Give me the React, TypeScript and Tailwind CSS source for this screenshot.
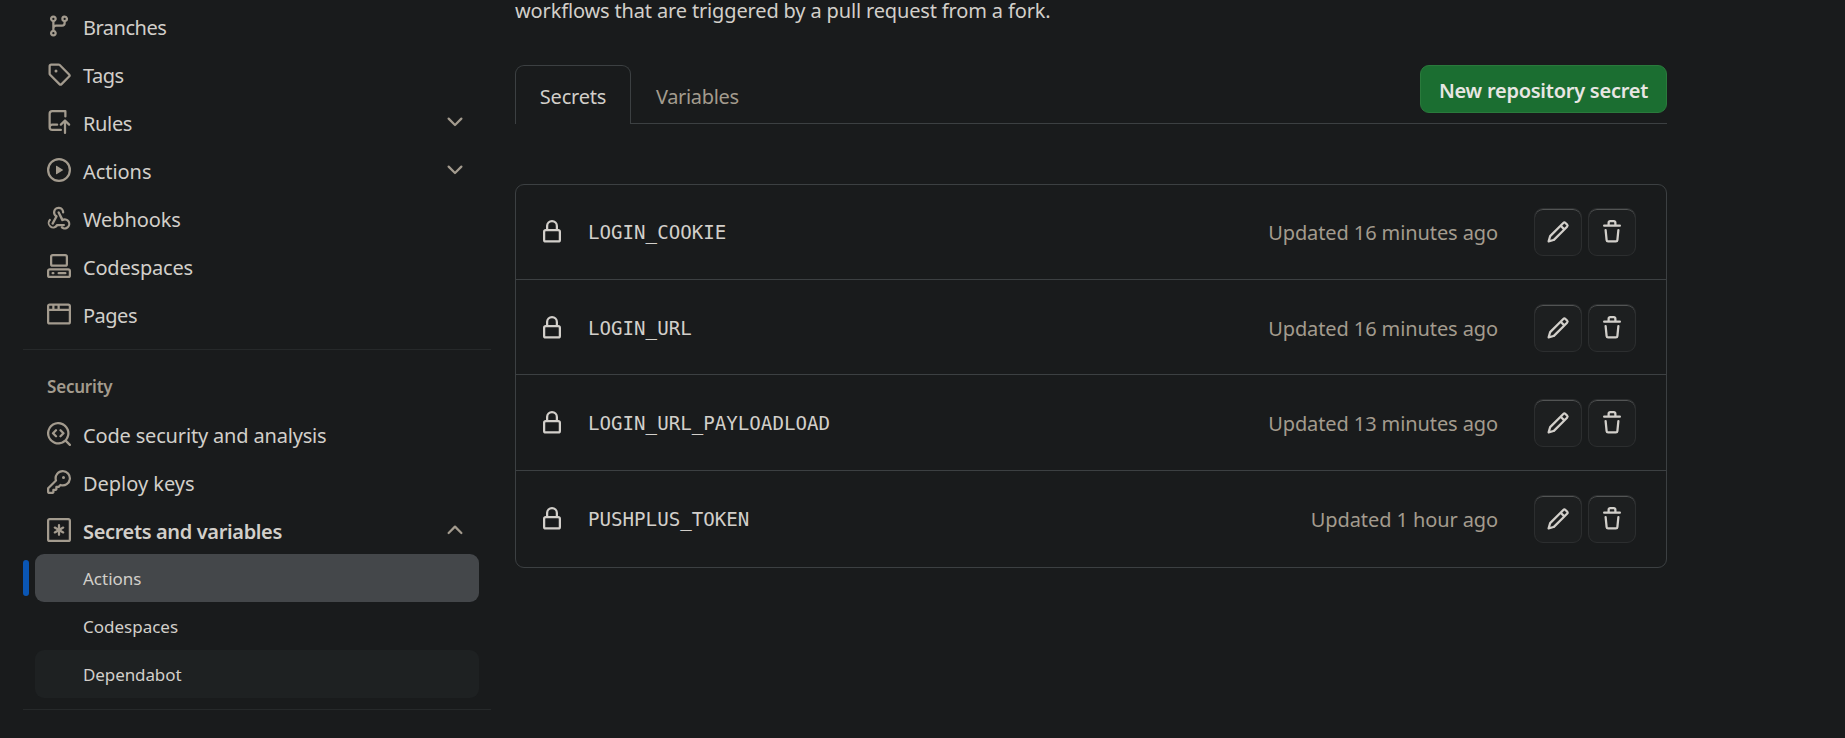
import type { ReactNode } from "react";

const ICONS = {
  branch:
    "M9.5 3.25a2.25 2.25 0 1 1 3 2.122V6A2.5 2.5 0 0 1 10 8.5H6a1 1 0 0 0-1 1v1.128a2.251 2.251 0 1 1-1.5 0V5.372a2.25 2.25 0 1 1 1.5 0v1.836A2.493 2.493 0 0 1 6 7h4a1 1 0 0 0 1-1v-.628A2.25 2.25 0 0 1 9.5 3.25Zm-6 0a.75.75 0 1 0 1.5 0 .75.75 0 0 0-1.5 0Zm8.25-.75a.75.75 0 1 0 0 1.5.75.75 0 0 0 0-1.5ZM4.25 12a.75.75 0 1 0 0 1.5.75.75 0 0 0 0-1.5Z",
  tag: "M1 7.775V2.75C1 1.784 1.784 1 2.75 1h5.025c.464 0 .91.184 1.238.513l6.25 6.25a1.75 1.75 0 0 1 0 2.474l-5.026 5.026a1.75 1.75 0 0 1-2.474 0l-6.25-6.25A1.752 1.752 0 0 1 1 7.775Zm1.5 0c0 .066.026.13.073.177l6.25 6.25a.25.25 0 0 0 .354 0l5.025-5.025a.25.25 0 0 0 0-.354l-6.25-6.25a.25.25 0 0 0-.177-.073H2.75a.25.25 0 0 0-.25.25ZM6 5a1 1 0 1 1 0 2 1 1 0 0 1 0-2Z",
  repoPush:
    "M1 2.5A2.5 2.5 0 0 1 3.5 0h8.75a.75.75 0 0 1 .75.75v3.5a.75.75 0 0 1-1.5 0V1.5h-8a1 1 0 0 0-1 1v6.708A2.493 2.493 0 0 1 3.5 9h3.25a.75.75 0 0 1 0 1.5H3.5a1 1 0 0 0 0 2h5.75a.75.75 0 0 1 0 1.5H3.5A2.5 2.5 0 0 1 1 11.5Zm13.23 7.79-1.48-1.48v6.44a.75.75 0 0 1-1.5 0V8.81l-1.48 1.48a.749.749 0 0 1-1.275-.326.749.749 0 0 1 .215-.734l2.75-2.75a.75.75 0 0 1 1.06 0l2.75 2.75a.749.749 0 0 1-.326 1.275.749.749 0 0 1-.734-.215Z",
  play: "M8 0a8 8 0 1 1 0 16A8 8 0 0 1 8 0ZM1.5 8a6.5 6.5 0 1 0 13 0 6.5 6.5 0 0 0-13 0Zm4.879-2.773 4.264 2.559a.25.25 0 0 1 0 .428l-4.264 2.559A.25.25 0 0 1 6 10.559V5.442a.25.25 0 0 1 .379-.215Z",
  webhook:
    "M5.5 4.25a2.25 2.25 0 0 1 4.5 0 .75.75 0 0 0 1.5 0 3.75 3.75 0 1 0-6.14 2.889l-2.272 4.258a.75.75 0 0 0 1.324.706L7 7.25a.75.75 0 0 0-.309-1.015A2.25 2.25 0 0 1 5.5 4.25Zm2.25-.75a.75.75 0 0 1 .667.407l2.315 4.422a3.75 3.75 0 1 1-1.268 6.546.75.75 0 0 1 .953-1.158 2.25 2.25 0 1 0 .233-3.65.75.75 0 0 1-1.073-.281L7.087 4.603A.75.75 0 0 1 7.75 3.5Zm-5.226 5.436a.75.75 0 0 1-.286 1.021A2.25 2.25 0 1 0 5.9 12.56a.75.75 0 0 1 .741-.635h4.609a.75.75 0 0 1 0 1.5H7.268a3.751 3.751 0 1 1-5.765-4.775.75.75 0 0 1 1.021.286Z",
  codespaces:
    "M0 11.25c0-.966.784-1.75 1.75-1.75h12.5c.966 0 1.75.784 1.75 1.75v3A1.75 1.75 0 0 1 14.25 16H1.75A1.75 1.75 0 0 1 0 14.25Zm2-9.5C2 .784 2.784 0 3.75 0h8.5C13.216 0 14 .784 14 1.75v5a1.75 1.75 0 0 1-1.75 1.75h-8.5A1.75 1.75 0 0 1 2 6.75Zm1.75-.25a.25.25 0 0 0-.25.25v5c0 .138.112.25.25.25h8.5a.25.25 0 0 0 .25-.25v-5a.25.25 0 0 0-.25-.25Zm-2 9.5a.25.25 0 0 0-.25.25v3c0 .138.112.25.25.25h12.5a.25.25 0 0 0 .25-.25v-3a.25.25 0 0 0-.25-.25ZM7 12.75a.75.75 0 0 1 .75-.75h4.5a.75.75 0 0 1 0 1.5h-4.5a.75.75 0 0 1-.75-.75Zm-4 0a.75.75 0 0 1 .75-.75h.5a.75.75 0 0 1 0 1.5h-.5a.75.75 0 0 1-.75-.75Z",
  browser:
    "M0 2.75C0 1.784.784 1 1.75 1h12.5c.966 0 1.75.784 1.75 1.75v10.5A1.75 1.75 0 0 1 14.25 15H1.75A1.75 1.75 0 0 1 0 13.25ZM14.5 6h-13v7.25c0 .138.112.25.25.25h12.5a.25.25 0 0 0 .25-.25Zm-6-3.5v2h6V2.75a.25.25 0 0 0-.25-.25ZM5 2.5v2h2v-2Zm-3.25 0a.25.25 0 0 0-.25.25V4.5h2v-2Z",
  codescan:
    "M8.47 4.97a.75.75 0 0 0 0 1.06L9.94 7.5 8.47 8.97a.75.75 0 1 0 1.06 1.06l2-2a.75.75 0 0 0 0-1.06l-2-2a.75.75 0 0 0-1.06 0ZM6.53 6.03a.75.75 0 0 0-1.06-1.06l-2 2a.75.75 0 0 0 0 1.06l2 2a.75.75 0 1 0 1.06-1.06L5.06 7.5l1.47-1.47Z M12.246 13.307a7.501 7.501 0 1 1 1.06-1.06l2.474 2.473a.749.749 0 0 1-.326 1.275.749.749 0 0 1-.734-.215ZM1.5 7.5a6.002 6.002 0 0 0 3.608 5.504 6.002 6.002 0 0 0 6.486-1.117.748.748 0 0 1 .292-.293A6 6 0 1 0 1.5 7.5Z",
  key: "M10.5 0a5.499 5.499 0 1 1-1.288 10.848l-.932.932a.749.749 0 0 1-.53.22H7v.75a.749.749 0 0 1-.22.53l-.5.5a.749.749 0 0 1-.53.22H5v.75a.749.749 0 0 1-.22.53l-.5.5a.749.749 0 0 1-.53.22h-2A1.75 1.75 0 0 1 0 14.25v-2c0-.199.079-.389.22-.53l4.932-4.932A5.5 5.5 0 0 1 10.5 0Zm-4 5.5c-.001.431.069.86.205 1.269a.75.75 0 0 1-.181.768L1.5 12.56v1.69c0 .138.112.25.25.25h1.69l.06-.06v-1.19a.75.75 0 0 1 .75-.75h1.19l.06-.06v-1.19a.75.75 0 0 1 .75-.75h1.19l1.023-1.025a.75.75 0 0 1 .768-.18A4 4 0 1 0 6.5 5.5ZM11 6a1 1 0 1 1 0-2 1 1 0 0 1 0 2Z",
  asterisk:
    "M14.25 0C15.216 0 16 .784 16 1.75v12.5A1.75 1.75 0 0 1 14.25 16H1.75A1.75 1.75 0 0 1 0 14.25V1.75C0 .784.784 0 1.75 0ZM1.75 1.5a.25.25 0 0 0-.25.25v12.5c0 .138.112.25.25.25h12.5a.25.25 0 0 0 .25-.25V1.75a.25.25 0 0 0-.25-.25ZM8 4a.75.75 0 0 1 .75.75v1.951l1.69-.975a.75.75 0 0 1 .75 1.299L9.5 8l1.69.975a.75.75 0 0 1-.75 1.3L8.75 9.298v1.951a.75.75 0 0 1-1.5 0V9.299l-1.69.976a.75.75 0 0 1-.75-1.3L6.5 8l-1.69-.975a.75.75 0 0 1 .75-1.3l1.69.976V4.75A.75.75 0 0 1 8 4Z",
  lock: "M4 4a4 4 0 0 1 8 0v2h.25c.966 0 1.75.784 1.75 1.75v5.5A1.75 1.75 0 0 1 12.25 15h-8.5A1.75 1.75 0 0 1 2 13.25v-5.5C2 6.784 2.784 6 3.75 6H4Zm8.25 3.5h-8.5a.25.25 0 0 0-.25.25v5.5c0 .138.112.25.25.25h8.5a.25.25 0 0 0 .25-.25v-5.5a.25.25 0 0 0-.25-.25ZM10.5 6V4a2.5 2.5 0 1 0-5 0v2Z",
  pencil:
    "M11.013 1.427a1.75 1.75 0 0 1 2.474 0l1.086 1.086a1.75 1.75 0 0 1 0 2.474l-8.61 8.61c-.21.21-.47.364-.756.445l-3.251.93a.75.75 0 0 1-.927-.928l.929-3.25c.081-.286.235-.547.445-.758l8.61-8.61Zm.176 4.823L9.75 4.81l-6.286 6.287a.253.253 0 0 0-.064.108l-.558 1.953 1.953-.558a.253.253 0 0 0 .108-.064Zm1.238-3.763a.25.25 0 0 0-.354 0L10.811 3.75l1.439 1.44 1.263-1.263a.25.25 0 0 0 0-.354Z",
  trash:
    "M11 1.75V3h2.25a.75.75 0 0 1 0 1.5H2.75a.75.75 0 0 1 0-1.5H5V1.75C5 .784 5.784 0 6.75 0h2.5C10.216 0 11 .784 11 1.75ZM4.496 6.675l.66 6.6a.25.25 0 0 0 .249.225h5.19a.25.25 0 0 0 .249-.225l.66-6.6a.75.75 0 0 1 1.492.149l-.66 6.6A1.748 1.748 0 0 1 10.595 15h-5.19a1.75 1.75 0 0 1-1.741-1.575l-.66-6.6a.75.75 0 1 1 1.492-.15ZM6.5 1.75V3h3V1.75a.25.25 0 0 0-.25-.25h-2.5a.25.25 0 0 0-.25.25Z",
  chevronDown:
    "M12.78 5.22a.749.749 0 0 1 0 1.06l-4.25 4.25a.749.749 0 0 1-1.06 0L3.22 6.28a.749.749 0 1 1 1.06-1.06L8 8.939l3.72-3.719a.749.749 0 0 1 1.06 0Z",
  chevronUp:
    "M3.22 10.53a.749.749 0 0 1 0-1.06l4.25-4.25a.749.749 0 0 1 1.06 0l4.25 4.25a.749.749 0 1 1-1.06 1.06L8 6.811 4.28 10.53a.749.749 0 0 1-1.06 0Z",
};

type IconName = keyof typeof ICONS;

function Icon({ name }: { name: IconName }) {
  return (
    <svg viewBox="0 0 16 16" className="size-6 shrink-0 fill-current" aria-hidden="true">
      <path d={ICONS[name]} />
    </svg>
  );
}

type NavItem = { label: string; icon: IconName; chevron?: IconName; text: string };

const codeItems: NavItem[] = [
  { label: "Branches", icon: "branch", text: "tracking-[-0.5px]" },
  { label: "Tags", icon: "tag", text: "tracking-[-0.5px]" },
  { label: "Rules", icon: "repoPush", chevron: "chevronDown", text: "tracking-[-0.35px]" },
  { label: "Actions", icon: "play", chevron: "chevronDown", text: "tracking-[-0.05px]" },
  { label: "Webhooks", icon: "webhook", text: "tracking-[-0.1px]" },
  { label: "Codespaces", icon: "codespaces", text: "tracking-[-0.2px]" },
  { label: "Pages", icon: "browser", text: "tracking-[-0.5px]" },
];

const securityItems: NavItem[] = [
  { label: "Code security and analysis", icon: "codescan", text: "tracking-[-0.17px]" },
  { label: "Deploy keys", icon: "key", text: "tracking-[-0.03px]" },
  {
    label: "Secrets and variables",
    icon: "asterisk",
    chevron: "chevronUp",
    text: "font-semibold tracking-[-0.36px]",
  },
];

function NavRow({ item }: { item: NavItem }) {
  return (
    <li className="flex h-12 items-center px-3 text-[#a39b8e]">
      <Icon name={item.icon} />
      <span className={`ml-3 flex-1 pt-[3px] text-xl leading-[30px] text-[#d2cfca] ${item.text}`}>{item.label}</span>
      {item.chevron && <Icon name={item.chevron} />}
    </li>
  );
}

function SubRow({ label, className = "" }: { label: string; className?: string }) {
  return (
    <li className={`flex h-12 items-center rounded-[9px] pl-12 text-[17px] text-[#d2cfca] ${className}`}>
      <span className="pt-px">{label}</span>
    </li>
  );
}

const secrets = [
  { name: "LOGIN_COOKIE", updated: "Updated 16 minutes ago", row: "h-[94px]" },
  { name: "LOGIN_URL", updated: "Updated 16 minutes ago", row: "h-[95px] border-t pt-0.5" },
  { name: "LOGIN_URL_PAYLOADLOAD", updated: "Updated 13 minutes ago", row: "h-24 border-t" },
  { name: "PUSHPLUS_TOKEN", updated: "Updated 1 hour ago", row: "h-[97px] border-t" },
];

function IconButton({ label, children }: { label: string; children: ReactNode }) {
  return (
    <button
      aria-label={label}
      className="flex size-12 items-center justify-center rounded-[9px] border border-[#2c2e2f] bg-[#1d1f20] text-[#d2cfca] shadow-[inset_0_1px_0_#525454]"
    >
      {children}
    </button>
  );
}

export default function App() {
  return (
    <div className="flex h-[738px] w-full overflow-hidden bg-[#191b1c] font-['Noto_Sans',sans-serif]">
      <nav className="ml-[23px] w-[468px] shrink-0 pt-0.5">
        <ul className="px-3">
          {codeItems.map((item) => (
            <NavRow key={item.label} item={item} />
          ))}
        </ul>
        <div className="mt-[11px] h-px bg-[#26292a]" />
        <h3 className="mt-[25px] mb-[11px] pl-6 text-[17px] leading-6 font-semibold tracking-[-0.2px] text-[#a39b8e]">
          Security
        </h3>
        <ul className="px-3">
          {securityItems.map((item) => (
            <NavRow key={item.label} item={item} />
          ))}
        </ul>
        <ul className="relative px-3">
          <span className="absolute top-1.5 left-0 h-9 w-1.5 rounded-full bg-[#0a56b4]" />
          <SubRow label="Actions" className="bg-[#44474a]" />
          <SubRow label="Codespaces" />
          <SubRow label="Dependabot" className="bg-[#1e2122] tracking-[-0.1px]" />
        </ul>
        <div className="mt-[11px] h-px bg-[#26292a]" />
      </nav>

      <main className="ml-6 w-[1152px] text-xl text-[#d2cfca]">
        <p className="leading-[22px] tracking-[-0.15px]">
          workflows that are triggered by a pull request from a fork.
        </p>

        <div className="mt-[43px] flex h-[59px] items-start border-b border-[#3c4042]">
          <div className="flex h-[59px] w-[116px] items-center justify-center rounded-t-[9px] border border-b-0 border-[#3c4042] bg-[#191b1c] pt-1 tracking-[-0.2px]">
            Secrets
          </div>
          <div className="flex h-[59px] items-center pt-1 pl-[25px] tracking-[-0.35px] text-[#a39b8e]">Variables</div>
          <button className="ml-auto flex h-12 w-[247px] items-center justify-center rounded-[9px] border border-[#2a7a3c] bg-[#1b6e31] pt-[3px] font-semibold tracking-[-0.25px] whitespace-nowrap text-[#e8e6e3]">
            New repository secret
          </button>
        </div>

        <ul className="mt-[60px] rounded-[9px] border border-[#3c4042]">
          {secrets.map((secret) => (
            <li key={secret.name} className={`flex items-center border-[#3c4042] pr-[30px] pl-6 ${secret.row}`}>
              <Icon name="lock" />
              <code className="ml-6 pt-[3px] font-['DejaVu_Sans_Mono',monospace] text-[19.15px]">{secret.name}</code>
              <span className="mr-9 ml-auto pt-0.5 tracking-[-0.1px] text-[#a39b8e]">{secret.updated}</span>
              <div className="flex gap-1.5">
                <IconButton label={`Edit ${secret.name}`}>
                  <Icon name="pencil" />
                </IconButton>
                <IconButton label={`Remove ${secret.name}`}>
                  <Icon name="trash" />
                </IconButton>
              </div>
            </li>
          ))}
        </ul>
      </main>
    </div>
  );
}
